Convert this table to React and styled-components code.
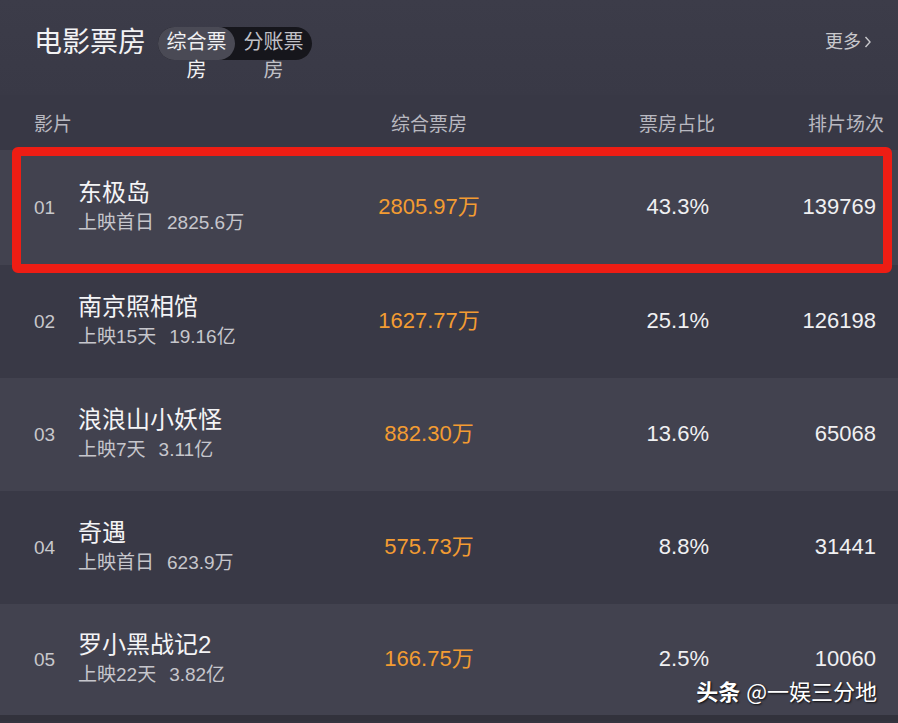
import React from "react";
import styled, { createGlobalStyle } from "styled-components";

const Global = createGlobalStyle`
  html, body { margin: 0; padding: 0; background: #34343f; }
  body { font-family: "Liberation Sans", "Noto Sans CJK SC", sans-serif; }
`;

const Page = styled.div`
  position: relative;
  width: 898px;
  height: 723px;
  background: #34343f;
  overflow: hidden;
  font-family: "Liberation Sans", "Noto Sans CJK SC", sans-serif;
`;

const TopBar = styled.div`
  display: flex;
  align-items: flex-start;
  height: 95px;
  padding: 0 26px 0 34px;
  box-sizing: border-box;
  background: linear-gradient(#3c3c49, #393946);
`;

const Title = styled.div`
  margin-top: 26px;
  font-size: 28px;
  line-height: 34px;
  color: #f2f2f4;
`;

const Pill = styled.div`
  display: flex;
  margin: 27px 0 0 12px;
  height: 33px;
  background: #16161c;
  border-radius: 17px;
`;

const Tab = styled.div`
  width: 77px;
  height: 33px;
  box-sizing: border-box;
  padding: 1px 8px 0;
  font-size: 20px;
  line-height: 28px;
  text-align: center;
  border-radius: 17px;
  background: ${(p) => (p.$active ? "#4a4a55" : "transparent")};
  color: ${(p) => (p.$active ? "#f0f0f2" : "#c0c0c6")};
  overflow: visible;
`;

const More = styled.div`
  margin: 30px 0 0 auto;
  display: flex;
  align-items: center;
  gap: 3px;
  font-size: 18px;
  line-height: 24px;
  color: #c8c8cc;
`;

const Grid = styled.div`
  display: grid;
  grid-template-columns: 44px 291px 120px 1fr 169px;
  align-items: center;
  padding: 0 14px 0 34px;
  box-sizing: border-box;
`;

const HeaderRow = styled(Grid)`
  height: 55px;
  background: #383845;
  font-size: 19px;
  color: #b8b8c0;
`;

const HeadCell = styled.div`
  grid-column: ${(p) => p.$span || "auto"};
  text-align: ${(p) => p.$align || "left"};
`;

const Row = styled(Grid)`
  position: relative;
  z-index: ${(p) => (p.$raised ? 2 : 1)};
  height: ${(p) => p.$h}px;
  background: ${(p) => (p.$odd ? "#42424f" : "#393946")};
`;

const Rank = styled.div`
  font-size: 19px;
  color: #c8c8cc;
`;

const Name = styled.div`
  display: flex;
  flex-direction: column;
`;

const MovieTitle = styled.div`
  font-size: 24px;
  line-height: 30px;
  color: #f4f4f6;
`;

const Sub = styled.div`
  display: flex;
  gap: 13px;
  font-size: 19px;
  line-height: 30px;
  color: #c6c6cc;
`;

const BoxOffice = styled.div`
  text-align: center;
  font-size: 22px;
  line-height: 26px;
  margin-top: -2px;
  color: #f39c32;
`;

const Num = styled.div`
  text-align: right;
  padding-right: ${(p) => p.$pr}px;
  font-size: 22px;
  line-height: 26px;
  margin-top: -2px;
  color: #f0f0f2;
`;

const Highlight = styled.div`
  position: absolute;
  z-index: 3;
  top: -3px;
  left: 12px;
  right: 6px;
  bottom: -8px;
  border: 9px solid #ee1d14;
  border-radius: 6px;
  pointer-events: none;
`;

const Footer = styled.div`
  height: 6px;
  background: #32323c;
`;

const Watermark = styled.div`
  position: absolute;
  z-index: 5;
  right: 21px;
  bottom: 20px;
  font-size: 22px;
  line-height: 26px;
  color: #ffffff;
  text-shadow: 1px 1px 2px rgba(0, 0, 0, 0.85);
  font-family: "Noto Sans CJK SC", sans-serif;
  b { font-weight: 700; margin-right: 6px; }
`;

const movies = [
  { rank: "01", name: "东极岛", day: "上映首日", total: "2825.6万", box: "2805.97万", ratio: "43.3%", shows: "139769", h: 115, hl: true },
  { rank: "02", name: "南京照相馆", day: "上映15天", total: "19.16亿", box: "1627.77万", ratio: "25.1%", shows: "126198", h: 113 },
  { rank: "03", name: "浪浪山小妖怪", day: "上映7天", total: "3.11亿", box: "882.30万", ratio: "13.6%", shows: "65068", h: 113 },
  { rank: "04", name: "奇遇", day: "上映首日", total: "623.9万", box: "575.73万", ratio: "8.8%", shows: "31441", h: 113 },
  { rank: "05", name: "罗小黑战记2", day: "上映22天", total: "3.82亿", box: "166.75万", ratio: "2.5%", shows: "10060", h: 111 },
];

export default function App() {
  return (
    <Page>
      <Global />
      <TopBar>
        <Title>电影票房</Title>
        <Pill>
          <Tab $active>综合票房</Tab>
          <Tab>分账票房</Tab>
        </Pill>
        <More>
          更多
          <svg width="8" height="14" viewBox="0 0 8 14">
            <polyline points="1.5,2 6,7 1.5,12" fill="none" stroke="#c8c8cc" strokeWidth="1.4" />
          </svg>
        </More>
      </TopBar>
      <HeaderRow>
        <HeadCell $span="1 / 3">影片</HeadCell>
        <HeadCell $align="center">综合票房</HeadCell>
        <HeadCell $align="right">票房占比</HeadCell>
        <HeadCell $align="right">排片场次</HeadCell>
      </HeaderRow>
      {movies.map((m, i) => (
        <Row key={m.rank} $odd={i % 2 === 0} $h={m.h} $raised={m.hl}>
          <Rank>{m.rank}</Rank>
          <Name>
            <MovieTitle>{m.name}</MovieTitle>
            <Sub>
              <span>{m.day}</span>
              <span>{m.total}</span>
            </Sub>
          </Name>
          <BoxOffice>{m.box}</BoxOffice>
          <Num $pr={6}>{m.ratio}</Num>
          <Num $pr={8}>{m.shows}</Num>
          {m.hl && <Highlight />}
        </Row>
      ))}
      <Footer />
      <Watermark>
        <b>头条</b>@一娱三分地
      </Watermark>
    </Page>
  );
}
